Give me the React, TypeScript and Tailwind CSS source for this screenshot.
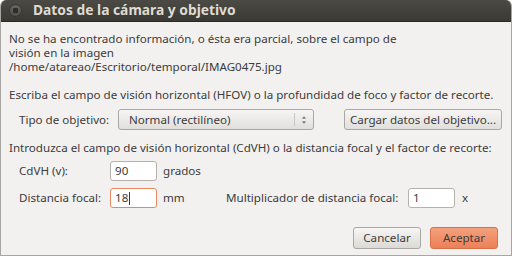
const inputCls =
  "flex h-full w-[47px] items-center rounded-[3px] border bg-white px-[4px] text-[#3c3c3c]";

export default function App() {
  return (
    <div className="flex h-[256px] w-[512px] flex-col overflow-hidden whitespace-nowrap rounded-t-[6px] border-x border-b border-[#a8a6a2] bg-[#f2f1f0] font-['Noto_Sans',sans-serif] text-[11.6px] text-[#3c3c3c]">
      {/* title bar */}
      <div className="flex h-[22px] shrink-0 items-center border-b border-[#2a2926] bg-gradient-to-b from-[#4b4a45] to-[#3a3934]">
        <div className="ml-[8px] flex h-[13px] w-[13px] items-center justify-center rounded-full bg-gradient-to-b from-[#6a6963] to-[#4c4b46] shadow-[inset_0_0_0_1px_#35342f]">
          <div className="h-[5px] w-[5px] rounded-[1px] bg-[#2e2d2a]" />
        </div>
        <span className="ml-[11px] text-[13.8px] font-bold text-[#dfdbd2]">Datos de la cámara y objetivo</span>
      </div>

      <div className="flex flex-1 flex-col px-[8px] pt-[10px]">
        <p className="leading-[14px]">
          No se ha encontrado información, o ésta era parcial, sobre el campo de
          <br />
          visión en la imagen
          <br />
          /home/atareao/Escritorio/temporal/IMAG0475.jpg
        </p>

        <p className="mt-[14px] leading-[14px]">
          Escriba el campo de visión horizontal (HFOV) o la profundidad de foco y factor de recorte.
        </p>

        <div className="mt-[7px] flex h-[21px] items-center pl-[10px]">
          <span className="w-[99px]">Tipo de objetivo:</span>
          <div className="flex h-full w-[196px] items-center rounded-[3px] border border-[#aba8a3] bg-gradient-to-b from-[#f7f6f5] to-[#e1dfdc] pl-[10px]">
            <span className="flex-1">Normal (rectilíneo)</span>
            <div className="h-[13px] w-px bg-[#c9c6c1]" />
            <svg width="16" height="14" viewBox="0 0 16 14" className="mx-[1px]">
              <path d="M6 5.5 L8 3.5 L10 5.5 Z" fill="#5a5955" />
              <path d="M6 8.5 L8 10.5 L10 8.5 Z" fill="#5a5955" />
            </svg>
          </div>
          <div className="ml-[30px] flex h-full w-[158px] items-center justify-center rounded-[3px] border border-[#aba8a3] bg-gradient-to-b from-[#f7f6f5] to-[#e1dfdc]">
            Cargar datos del objetivo...
          </div>
        </div>

        <p className="mt-[11px] leading-[14px]">
          Introduzca el campo de visión horizontal (CdVH) o la distancia focal y el factor de recorte:
        </p>

        <div className="mt-[6px] flex h-[20px] items-center pl-[10px]">
          <span className="w-[91px]">CdVH (v):</span>
          <div className={inputCls + " border-[#b5b2ad]"}>90</div>
          <span className="ml-[6px]">grados</span>
        </div>

        <div className="mt-[7px] flex h-[20px] items-center pl-[10px]">
          <span className="w-[91px]">Distancia focal:</span>
          <div className={inputCls + " border-[#e7875f]"}>
            18<span className="ml-px h-[13px] w-px bg-[#3c3c3c]" />
          </div>
          <span className="ml-[6px] w-[63px]">mm</span>
          <span className="w-[182px]">Multiplicador de distancia focal:</span>
          <div className={inputCls + " border-[#b5b2ad]"}>1</div>
          <span className="ml-[7px]">x</span>
        </div>

        <div className="mt-[19px] flex justify-end gap-[9px] pr-[5px]">
          <div className="flex h-[22px] w-[68px] items-center justify-center rounded-[3px] border border-[#aba8a3] bg-gradient-to-b from-[#f7f6f5] to-[#dcdad6]">
            Cancelar
          </div>
          <div className="flex h-[22px] w-[68px] items-center justify-center rounded-[3px] border border-[#d9714a] bg-gradient-to-b from-[#f5a07d] to-[#ec8058]">
            Aceptar
          </div>
        </div>
      </div>
    </div>
  );
}
